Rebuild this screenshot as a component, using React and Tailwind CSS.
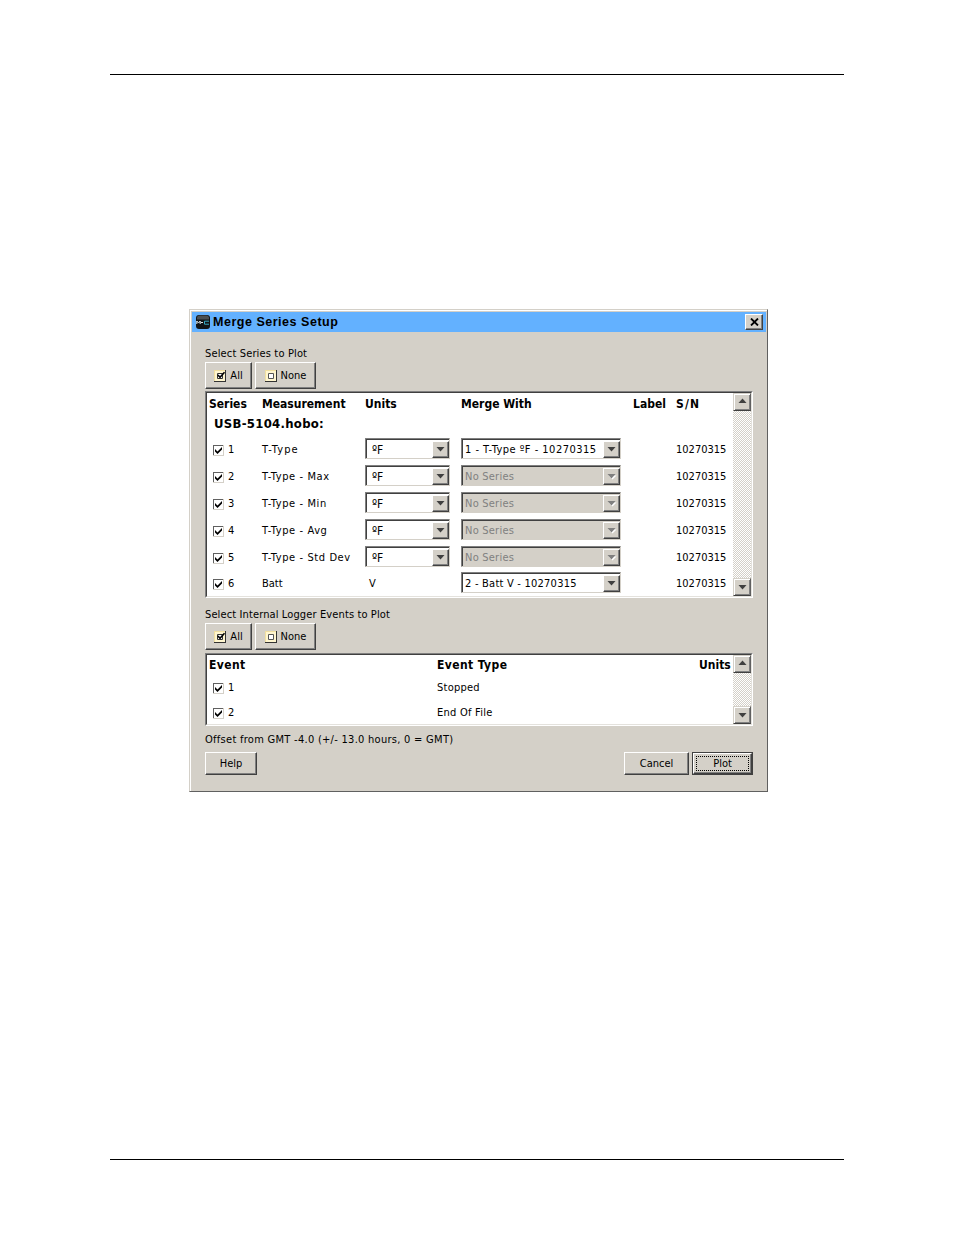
import clsx from 'clsx'

const series = [
  { id: 1, name: 'T-Type', unit: 'ºF', merge: '1 - T-Type ºF - 10270315' },
  { id: 2, name: 'T-Type - Max', unit: 'ºF' },
  { id: 3, name: 'T-Type - Min', unit: 'ºF' },
  { id: 4, name: 'T-Type - Avg', unit: 'ºF' },
  { id: 5, name: 'T-Type - Std Dev', unit: 'ºF' },
  { id: 6, name: 'Batt', unit: 'V', fixedUnit: true, merge: '2 - Batt V - 10270315' },
]

const events = [
  { id: 1, type: 'Stopped' },
  { id: 2, type: 'End Of File' },
]

const Arrow = ({ up, disabled }) => (
  <svg width="9" height="5" viewBox="0 0 9 5" className={clsx('shrink-0 overflow-visible', up && 'mb-[3px] rotate-180')}>
    {disabled && <path d="M1.5 1.5h8l-4 4z" fill="#fff" />}
    <path d="M0.5 0h8l-4 4.4z" fill={disabled ? '#808080' : '#404040'} />
  </svg>
)

const CheckBox = () => (
  <svg width="11" height="11" viewBox="0 0 11 11" shapeRendering="crispEdges">
    <path d="M0 0h11v11h-11z" fill="#d4d0c8" />
    <path d="M0 0h10v1h-9v9h-1z" fill="#606060" />
    <path d="M1 1h9v9h-9z" fill="#fff" />
    <path d="M2 4l2.5 2.5l4.5 -4.5v2.5l-4.5 4.5l-2.5 -2.5z" fill="#000" shapeRendering="auto" />
  </svg>
)

const SelectIcon = ({ checked }) => (
  <svg width="12" height="12" viewBox="0 0 12 12">
    <path d="M0 0h12v12h-12z" fill="#333" />
    <path d="M0 0h11v11h-11z" fill="#f0dfa0" />
    <path d="M1 1h10v10h-10z" fill="#fff6cf" />
    <path d="M3.5 3.5h5v5h-5z" fill="#fff" stroke={checked ? '#333' : '#555'} />
    {checked && <path d="M4 5l2 2.2l4.5 -5" fill="none" stroke="#000" strokeWidth="1.6" />}
  </svg>
)

const Button = ({ children, className }) => (
  <button
    className={clsx(
      'flex items-center justify-center border border-t-white border-l-white border-r-[#404040] border-b-[#404040] shadow-[inset_-1px_-1px_0_#808080]',
      className
    )}
  >
    {children}
  </button>
)

const SelectButtons = () => (
  <div className="flex gap-[3px]">
    <Button className="h-[27px] w-[47px] gap-[4px]">
      <SelectIcon checked />
      <span>All</span>
    </Button>
    <Button className="h-[27px] w-[61px] gap-[4px]">
      <SelectIcon />
      <span>None</span>
    </Button>
  </div>
)

const Combo = ({ value, disabled, className }) => (
  <div
    className={clsx(
      'flex h-[21px] items-center justify-between border border-t-[#808080] border-l-[#808080] border-r-[#d4d0c8] border-b-[#d4d0c8] shadow-[inset_1px_1px_0_#404040]',
      disabled ? 'bg-[#d4d0c8] text-[#808080]' : 'bg-white',
      className
    )}
  >
    <span className="pt-[2px] whitespace-pre">{value}</span>
    <div className="mt-px flex h-[17px] w-[17px] items-center justify-center border border-t-white border-l-white border-r-[#404040] border-b-[#404040] bg-[#d4d0c8] shadow-[inset_-1px_-1px_0_#808080]">
      <Arrow disabled={disabled} />
    </div>
  </div>
)

const ScrollButton = ({ up }) => (
  <div className="flex h-[18px] w-[18px] items-center justify-center border border-t-[#d4d0c8] border-l-[#d4d0c8] border-r-[#606060] border-b-[#404040] bg-[#d4d0c8] shadow-[inset_1px_1px_0_#fff,inset_-1px_-1px_0_#808080]">
    <Arrow up={up} />
  </div>
)

const ListBox = ({ children, className }) => (
  <div
    className={clsx(
      'flex w-[548px] border border-t-[#808080] border-l-[#808080] border-r-white border-b-white bg-white',
      className
    )}
  >
    <div className="flex flex-1 border border-t-[#404040] border-l-[#404040] border-r-[#e4e2dd] border-b-[#e4e2dd]">
      <div className="flex-1">{children}</div>
      <div className="flex w-[18px] flex-col justify-between bg-[repeating-conic-gradient(#d4d0c8_0_25%,#fff_0_50%)] bg-[length:2px_2px]">
        <ScrollButton up />
        <ScrollButton />
      </div>
    </div>
  </div>
)

const seriesGrid = 'grid grid-cols-[53px_103px_96px_172px_43px_1fr] items-center pl-[2px]'
const eventGrid = 'grid grid-cols-[228px_1fr_34px] items-center pl-[2px]'

const MergeDialog = () => (
  <div className="ml-[189px] h-[483px] w-[579px] border border-t-[#d4d0c8] border-l-[#d4d0c8] border-r-[#606060] border-b-[#606060] bg-[#d4d0c8] shadow-[inset_1px_1px_0_#fff]">
    {/* Title bar */}
    <div className="mx-[2px] mt-[2px] mr-px flex h-[20px] items-center justify-between bg-[#63b1ff] pr-[3px] pl-[4px]">
      <div className="flex items-center gap-[3px]">
        <svg width="14" height="14" viewBox="0 0 14 14">
          <rect width="14" height="14" rx="3" fill="#101417" />
          <path d="M1 3q0 -2.500 2.500 -2.500h7q2.500 0 2.500 2.500v1.500h-12z" fill="#4b4f52" />
          <path d="M0.800 9V6l1.700 2l1.700 -2v3M5 7.500h2" fill="none" stroke="#d8e4ea" />
          <path d="M13 6.200h-4.500v3h4.500" fill="none" stroke="#35a9c4" />
        </svg>
        <span className="font-['Liberation_Sans',sans-serif] text-[12.5px] font-bold tracking-[0.52px]">Merge Series Setup</span>
      </div>
      <Button className="h-[16px] w-[18px] bg-[#d4d0c8]">
        <svg width="9" height="8" viewBox="0 0 9 8">
          <path d="M1 0.500l7 7M8 0.500l-7 7" stroke="#000" strokeWidth="1.800" />
        </svg>
      </Button>
    </div>

    <div className="flex flex-col pt-[13px] pl-[15px]">
      <div className="h-[17px] leading-[17px] tracking-[0.15px]">Select Series to Plot</div>
      <SelectButtons />

      {/* Series list */}
      <ListBox className="mt-[2px] h-[207px]">
        <div className={clsx(seriesGrid, 'h-[21px] text-[12px] font-bold')}>
          <span>Series</span>
          <span>Measurement</span>
          <span>Units</span>
          <span>Merge With</span>
          <span>Label</span>
          <span className="tracking-[1.2px]">S/N</span>
        </div>
        <div className="h-[21px] pl-[7px] text-[13px] leading-[20px] font-bold tracking-[0.28px]">USB-5104.hobo:</div>
        {series.map(s => (
          <div key={s.id} className={clsx(seriesGrid, 'h-[27px] last:h-[25px]')}>
            <span className="flex items-center gap-[4px] pt-[3px] pl-[4px]">
              <CheckBox />
              {s.id}
            </span>
            <span className={clsx('pt-[3px]', s.id === 1 ? 'tracking-[1.1px]' : s.fixedUnit ? '' : 'tracking-[0.6px]')}>
              {s.name}
            </span>
            {s.fixedUnit ? (
              <span className="pt-[3px] pl-[4px]">{s.unit}</span>
            ) : (
              <Combo value={s.unit} className="w-[85px] pl-[6px] text-[12px]" />
            )}
            <Combo
              value={s.merge || 'No Series'}
              disabled={!s.merge}
              className={clsx('w-[160px] pl-[3px]', s.id === 1 ? 'tracking-[0.48px]' : 'tracking-[0.23px]')}
            />
            <span />
            <span className="pt-[3px]">10270315</span>
          </div>
        ))}
      </ListBox>

      <div className="mt-[8px] h-[17px] leading-[17px] tracking-[0.12px]">Select Internal Logger Events to Plot</div>
      <SelectButtons />

      {/* Event list */}
      <ListBox className="mt-[3px] h-[73px]">
        <div className={clsx(eventGrid, 'h-[20px] text-[12px] font-bold')}>
          <span className="tracking-[0.4px]">Event</span>
          <span className="tracking-[0.4px]">Event Type</span>
          <span>Units</span>
        </div>
        {events.map(e => (
          <div key={e.id} className={clsx(eventGrid, 'h-[25px] pt-px')}>
            <span className="flex items-center gap-[4px] pl-[4px]">
              <CheckBox />
              {e.id}
            </span>
            <span className="tracking-[0.25px]">{e.type}</span>
          </div>
        ))}
      </ListBox>

      <div className="mt-[5px] h-[17px] leading-[17px] tracking-[0.28px]">Offset from GMT -4.0 (+/- 13.0 hours, 0 = GMT)</div>

      {/* Actions */}
      <div className="mt-[4px] flex w-[548px] gap-[3px]">
        <Button className="mr-auto h-[23px] w-[52px]">Help</Button>
        <Button className="h-[23px] w-[65px]">Cancel</Button>
        <div className="h-[23px] w-[61px] border border-[#404040]">
          <Button className="h-full w-full p-[2px]">
            <span className="flex h-full w-full items-center justify-center border border-dotted border-black">Plot</span>
          </Button>
        </div>
      </div>
    </div>
  </div>
)

const App = () => {
  return (
    <div className="flex h-[1235px] w-[954px] flex-col bg-white font-['DejaVu_Sans_Condensed','DejaVu_Sans',sans-serif] text-[11px] leading-[16px] text-black">
      <div className="mx-[110px] mt-[74px] mb-[234px] h-px shrink-0 bg-black" />
      <MergeDialog />
      <div className="mx-[110px] mt-[367px] h-px shrink-0 bg-black" />
    </div>
  )
}

export default App
